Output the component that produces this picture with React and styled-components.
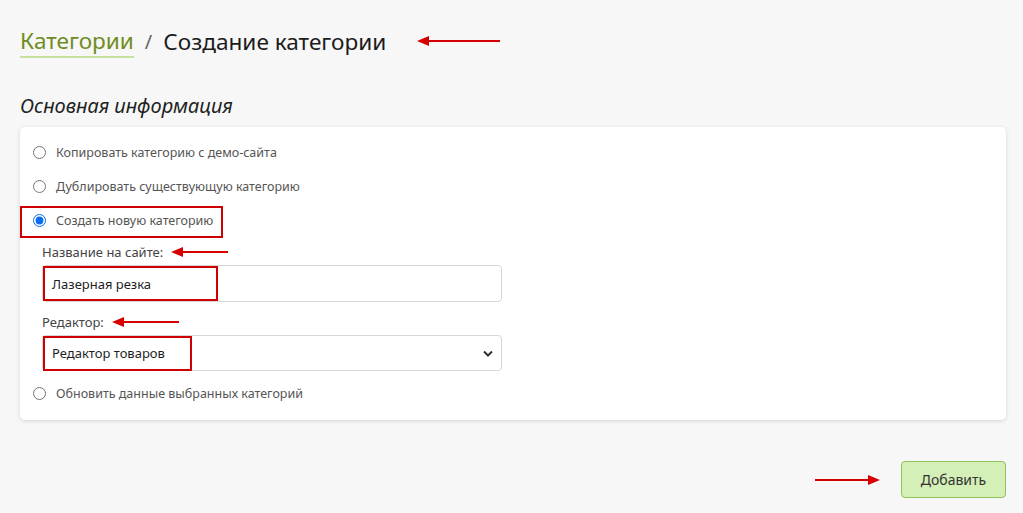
import React, { useState } from "react";
import styled, { createGlobalStyle } from "styled-components";

const GlobalStyle = createGlobalStyle`
  body {
    margin: 0;
    background: #f7f7f7;
    font-family: "Noto Sans", "Open Sans", sans-serif;
    color: #222;
  }
`;

const Page = styled.div`
  padding: 0 17px 0 20px;
  min-height: 513px;
  box-sizing: border-box;
`;

const Header = styled.div`
  display: flex;
  align-items: center;
  height: 30px;
  padding-top: 26px;
  font-size: 22.6px;
`;

const Crumb = styled.a`
  color: #6f8d1e;
  text-decoration: none;
  line-height: 30px;
  border-bottom: 2px solid #c6e29c;
  margin-top: 2px;
`;

const Sep = styled.span`
  color: #666;
  margin: 0 11px;
  font-size: 20px;
`;

const Current = styled.span`
  color: #1c1c1c;
`;

const Arrow = styled.svg`
  display: block;
  flex: none;
  margin-left: ${(p) => p.$gap || 0}px;
  margin-right: ${(p) => p.$after || 0}px;
`;

const SectionTitle = styled.h2`
  margin: 37px 0 0;
  font-size: 20px;
  font-weight: 400;
  font-style: italic;
  line-height: 26px;
  color: #222;
`;

const Card = styled.div`
  position: relative;
  margin-top: 8px;
  background: #fff;
  border-radius: 5px;
  box-shadow: 0 1px 4px rgba(0, 0, 0, 0.14);
  padding: 8px 0 10px 13px;
`;

const RadioRow = styled.label`
  display: flex;
  align-items: center;
  height: 34px;
  margin-top: ${(p) => p.$top || 0}px;
  font-size: 12.5px;
  color: #555;
  input {
    width: 13px;
    height: 13px;
    margin: 0 10px 0 0;
    accent-color: #0b6cf0;
  }
`;

const Fields = styled.div`
  padding-left: 9px;
  margin-top: 5px;
`;

const FieldLabel = styled.div`
  display: flex;
  align-items: center;
  height: 20px;
  margin-top: ${(p) => p.$top || 0}px;
  margin-bottom: 3px;
  font-size: 13px;
  color: #444;
`;

const Control = styled.div`
  position: relative;
  width: 460px;
  height: ${(p) => p.$h}px;
  box-sizing: border-box;
  border: 1px solid #d6d6d6;
  border-radius: 4px;
  background: #fff;
  display: flex;
  align-items: center;
  justify-content: space-between;
  padding: 0 8px 0 9px;
  font-size: 13px;
  color: #1e1e1e;
`;

const Mark = styled.div`
  position: absolute;
  left: ${(p) => p.$l}px;
  top: ${(p) => p.$t}px;
  width: ${(p) => p.$w}px;
  height: ${(p) => p.$h}px;
  box-sizing: border-box;
  border: 2px solid #d10000;
  pointer-events: none;
`;

const Footer = styled.div`
  display: flex;
  justify-content: flex-end;
  align-items: center;
  margin-top: 41px;
`;

const AddButton = styled.button`
  width: 105px;
  height: 37px;
  background: #d4f0b7;
  border: 1px solid #8fc15d;
  border-radius: 4px;
  font-family: inherit;
  font-size: 14px;
  color: #333;
  cursor: pointer;
`;

function RedArrow({ w, dir = "left", gap, after }) {
  const h = 10;
  const y = h / 2;
  const head = 12;
  return (
    <Arrow width={w} height={h} viewBox={`0 0 ${w} ${h}`} $gap={gap} $after={after}>
      {dir === "left" ? (
        <>
          <line x1={head - 1} y1={y} x2={w} y2={y} stroke="#d60000" strokeWidth="2" />
          <polygon points={`0,${y} ${head},0 ${head},${h}`} fill="#d60000" />
        </>
      ) : (
        <>
          <line x1="0" y1={y} x2={w - head + 1} y2={y} stroke="#d60000" strokeWidth="2" />
          <polygon points={`${w},${y} ${w - head},0 ${w - head},${h}`} fill="#d60000" />
        </>
      )}
    </Arrow>
  );
}

const options = [
  "Копировать категорию с демо-сайта",
  "Дублировать существующую категорию",
  "Создать новую категорию",
];

export default function App() {
  const [mode, setMode] = useState(2);

  return (
    <Page>
      <GlobalStyle />
      <Header>
        <Crumb href="#">Категории</Crumb>
        <Sep>/</Sep>
        <Current>Создание категории</Current>
        <RedArrow w={83} gap={31} />
      </Header>

      <SectionTitle>Основная информация</SectionTitle>

      <Card>
        {options.map((text, i) => (
          <RadioRow key={text}>
            <input type="radio" name="mode" checked={mode === i} onChange={() => setMode(i)} />
            {text}
          </RadioRow>
        ))}
        <Mark $l={0} $t={79} $w={203} $h={32} />

        <Fields>
          <FieldLabel>
            Название на сайте:
            <RedArrow w={57} gap={8} />
          </FieldLabel>
          <Control $h={37}>
            Лазерная резка
            <Mark $l={0} $t={0} $w={175} $h={35} />
          </Control>

          <FieldLabel $top={10}>
            Редактор:
            <RedArrow w={67} gap={8} />
          </FieldLabel>
          <Control $h={36}>
            Редактор товаров
            <svg width="10" height="7" viewBox="0 0 10 7">
              <path d="M1 1.5 L5 5.5 L9 1.5" fill="none" stroke="#333" strokeWidth="2" />
            </svg>
            <Mark $l={0} $t={0} $w={149} $h={35} />
          </Control>
        </Fields>

        <RadioRow $top={5}>
          <input type="radio" name="mode" checked={mode === 3} onChange={() => setMode(3)} />
          Обновить данные выбранных категорий
        </RadioRow>
      </Card>

      <Footer>
        <RedArrow w={65} dir="right" after={21} />
        <AddButton>Добавить</AddButton>
      </Footer>
    </Page>
  );
}
